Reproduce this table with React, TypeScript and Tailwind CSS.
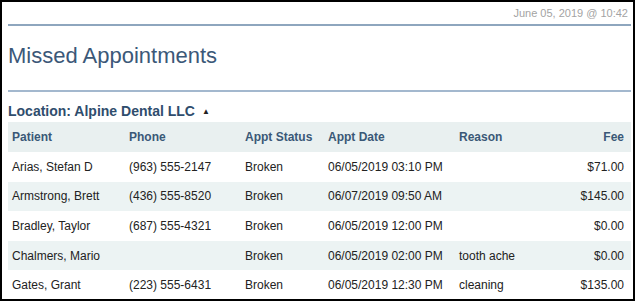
const rows = [
  { patient: "Arias, Stefan D", phone: "(963) 555-2147", status: "Broken", date: "06/05/2019 03:10 PM", reason: "", fee: "$71.00" },
  { patient: "Armstrong, Brett", phone: "(436) 555-8520", status: "Broken", date: "06/07/2019 09:50 AM", reason: "", fee: "$145.00" },
  { patient: "Bradley, Taylor", phone: "(687) 555-4321", status: "Broken", date: "06/05/2019 12:00 PM", reason: "", fee: "$0.00" },
  { patient: "Chalmers, Mario", phone: "", status: "Broken", date: "06/05/2019 02:00 PM", reason: "tooth ache", fee: "$0.00" },
  { patient: "Gates, Grant", phone: "(223) 555-6431", status: "Broken", date: "06/05/2019 12:30 PM", reason: "cleaning", fee: "$135.00" },
];

const cols = "grid grid-cols-[117px_116px_83px_131px_1fr_90px] items-center";

export default function App() {
  return (
    <div className="h-[301px] w-[635px] overflow-hidden border-2 border-black bg-white pl-[6px] pr-[2px] font-['Liberation_Sans',Arial,sans-serif]">
      <div className="flex h-[22px] items-center justify-end pr-[3px] text-[11px] text-[#a3a3a3]">
        June 05, 2019 @ 10:42
      </div>
      <div className="h-[2px] bg-[#8ea6be]" />
      <h1 className="flex h-[64px] items-center pb-[6px] text-[22px] font-normal text-[#3b5878]">
        Missed Appointments
      </h1>
      <div className="h-[2px] bg-[#a3b8ce]" />
      <div className="flex h-[30px] items-center gap-[7px] pt-[12px] pb-[3px] text-[14px] font-bold text-[#2f4d6d]">
        <span>Location: Alpine Dental LLC</span>
        <span className="text-[8px] text-[#222]">▲</span>
      </div>
      <div className="text-[12px]">
        <div className={`${cols} h-[30px] bg-[#e9f0f0] font-bold text-[#3a5877]`}>
          <div className="pl-[4px]">Patient</div>
          <div className="pl-[4px]">Phone</div>
          <div className="pl-[4px]">Appt Status</div>
          <div className="pl-[4px]">Appt Date</div>
          <div className="pl-[4px]">Reason</div>
          <div className="pr-[7px] text-right">Fee</div>
        </div>
        {rows.map((r, i) => (
          <div
            key={r.patient}
            className={`${cols} h-[29.6px] text-[#222] ${i % 2 === 1 ? "bg-[#ecf3f3]" : "bg-white"}`}
          >
            <div className="pl-[4px]">{r.patient}</div>
            <div className="pl-[4px]">{r.phone}</div>
            <div className="pl-[4px]">{r.status}</div>
            <div className="pl-[4px]">{r.date}</div>
            <div className="pl-[4px]">{r.reason}</div>
            <div className="pr-[7px] text-right">{r.fee}</div>
          </div>
        ))}
      </div>
    </div>
  );
}
